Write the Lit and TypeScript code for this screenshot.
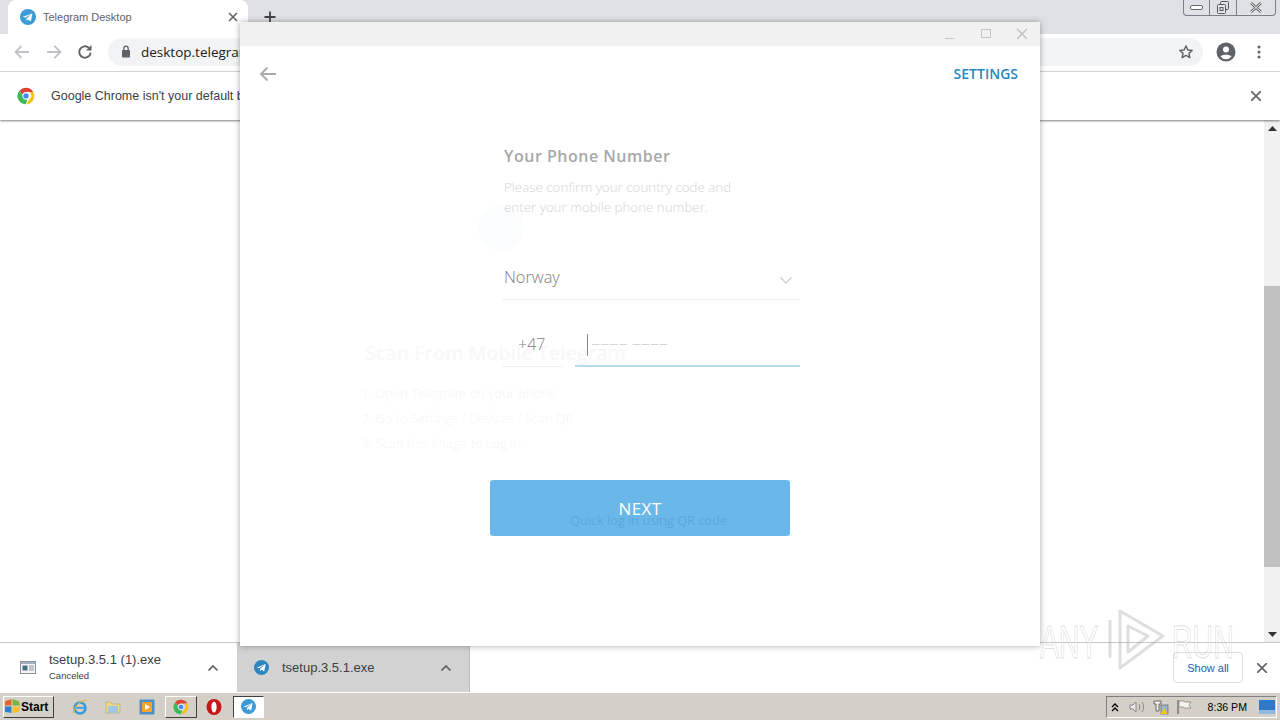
import { LitElement, html, css } from "lit";
import { customElement } from "lit/decorators.js";

const tgIcon = (s: number, c = "#3a9bd8") => html`<svg width=${s} height=${s} viewBox="0 0 24 24"><circle cx="12" cy="12" r="12" fill=${c}/><path d="M4.8 11.8 17.600 6.600c.6-.2 1.100.1.9.9l-2.100 10c-.2.7-.6.9-1.200.5l-3.300-2.400-1.600 1.500c-.2.2-.4.3-.7.3l.2-3.300 6-5.500c.3-.2-.1-.4-.4-.2l-7.500 4.700-3.200-1c-.7-.2-.7-.7.1-1z" fill="#fff"/></svg>`;

const chromeIcon = (s: number) => html`<svg width=${s} height=${s} viewBox="0 0 24 24"><path d="M12 1a11 11 0 0 1 9.600 5.600H12a5.400 5.400 0 0 0-5.100 3.600L3.500 4.600A11 11 0 0 1 12 1z" fill="#db4437"/><path d="M21.600 6.600A11 11 0 0 1 12.600 23l4.100-7a5.400 5.400 0 0 0-.6-9.400z" fill="#f4c20d"/><path d="M3.500 4.600l4.600 8A5.400 5.400 0 0 0 14 17.100L11.600 23A11 11 0 0 1 3.500 4.600z" fill="#3cba54"/><circle cx="12" cy="12" r="4.300" fill="#4a89f0" stroke="#fff" stroke-width="1.200"/></svg>`;

@customElement("tg-window")
class TgWindow extends LitElement {
  static styles = css`
    :host { position: absolute; left: 240px; top: 22px; width: 800px; height: 624px; z-index: 3; background: #fff; box-shadow: 0 0 6px rgba(0,0,0,.35); display: flex; flex-direction: column; font-family: "Open Sans", sans-serif; overflow: hidden; }
    .title { height: 24px; background: #f1f1f1; display: flex; justify-content: flex-end; flex: none; }
    .wb { width: 36px; height: 24px; display: flex; align-items: center; justify-content: center; }
    .body { position: relative; flex: 1; }
    .back { position: absolute; left: 19px; top: 20px; display: block; }
    .settings { position: absolute; right: 22px; top: 18px; font-size: 14px; font-weight: 600; color: #2a86bd; line-height: 20px; }
    .ghost { position: absolute; color: #f8f8f8; white-space: nowrap; }
    .g1 { left: 125px; top: 293px; font-size: 19.500px; font-weight: 600; }
    .g2 { left: 122px; top: 335px; font-size: 12.600px; line-height: 25px; white-space: pre; }
    .circle { position: absolute; left: 238px; top: 159px; width: 46px; height: 46px; border-radius: 50%; background: #fafdfe; }
    .form { position: absolute; left: 264px; top: 98px; width: 296px; }
    h1 { margin: 0; font-size: 16px; font-weight: 600; color: #a8a8a8; line-height: 24px; letter-spacing: .5px; }
    .desc { margin-top: 9px; font-size: 13.350px; font-weight: 300; line-height: 20px; color: #d4d4d4; }
    .country { margin: 40px 0 0 -2px; padding-left: 2px; height: 42px; border-bottom: 1px solid #f0f0f0; font-size: 16.400px; font-weight: 300; color: #808080; line-height: 40px; position: relative; }
    .chev { position: absolute; right: 7px; top: 19px; }
    .phone { margin: 23px 0 0 -2px; display: flex; gap: 12px; height: 44px; }
    .code { width: 61px; border-bottom: 1px solid #f0f0f0; box-sizing: border-box; padding-left: 16px; font-size: 16px; font-weight: 300; line-height: 43px; color: #808080; }
    .num { flex: 1; border-bottom: 2px solid #b8dbf0; position: relative; box-sizing: border-box; font-size: 16px; font-weight: 300; color: #c8c8c8; line-height: 43px; padding-left: 16px; }
    .caret { position: absolute; left: 12px; top: 11px; width: 1px; height: 22px; background: #8a8a8a; }
    .next { position: absolute; left: 250px; top: 434px; width: 300px; height: 56px; border-radius: 3px; background: #69b8e9; color: #fff; font-size: 17px; font-weight: 500; text-align: center; line-height: 58px; letter-spacing: .4px; }
    .qr { position: absolute; left: 80px; top: 28px; line-height: 24px; font-size: 12.700px; font-weight: 400; letter-spacing: 0; color: #5aa8da; white-space: nowrap; }
    .nx { position: relative; z-index: 1; }
  `;
  render() {
    return html`
      <div class="title">
        <div class="wb"><svg width="12" height="12"><path d="M1 10.500h9" stroke="#c4c4c4"/></svg></div>
        <div class="wb"><svg width="12" height="12"><rect x="1.500" y="1.500" width="9" height="8" fill="none" stroke="#c4c4c4"/></svg></div>
        <div class="wb"><svg width="12" height="12"><path d="M1 1l10 10M11 1L1 11" stroke="#bdbdbd" stroke-width="1.200"/></svg></div>
      </div>
      <div class="body">
        <svg class="back" width="18" height="16" viewBox="0 0 18 16"><path d="M17 8H2M8.500 1.500 2 8l6.500 6.500" fill="none" stroke="#a9a9a9" stroke-width="1.800"/></svg>
        <div class="settings">SETTINGS</div>
        <div class="circle"></div>
        <div class="ghost g1">Scan From Mobile Telegram</div>
        <div class="ghost g2">1. Open Telegram on your phone
2. Go to Settings / Devices / Scan QR
3. Scan this image to Log In</div>
        <div class="form">
          <h1>Your Phone Number</h1>
          <div class="desc">Please confirm your country code and<br>enter your mobile phone number.</div>
          <div class="country">Norway<svg class="chev" width="14" height="9" viewBox="0 0 14 9"><path d="M1.500 1.500 7 7l5.500-5.500" fill="none" stroke="#d0d0d0" stroke-width="1.500"/></svg></div>
          <div class="phone"><div class="code">+47</div><div class="num"><span class="caret"></span>−−−− −−−−</div></div>
        </div>
        <div class="next"><span class="nx">NEXT</span><span class="qr">Quick log in using QR code</span></div>
      </div>`;
  }
}

@customElement("app-root")
class AppRoot extends LitElement {
  static styles = css`
    :host { display: flex; flex-direction: column; position: relative; width: 1280px; height: 720px; overflow: hidden; font-family: "Liberation Sans", sans-serif; background: #fff; }
    .tabs { height: 34px; background: #dee1e6; display: flex; flex: none; position: relative; }
    .tab { margin-left: 8px; width: 240px; height: 34px; background: #fff; border-radius: 8px 8px 0 0; display: flex; align-items: center; box-sizing: border-box; padding: 0 10px 0 12px; font-size: 11px; color: #5f6368; gap: 7px; }
    .tab .t { flex: 1; }
    .plus { margin-left: 15px; width: 14px; height: 34px; display: flex; align-items: center; }
    .caption { position: absolute; right: 4px; top: 0; width: 93px; height: 16px; border: 1px solid #7b7f86; border-top: none; border-radius: 0 0 4px 4px; display: flex; box-sizing: border-box; }
    .cap { display: flex; align-items: center; justify-content: center; border-right: 1px solid #7b7f86; width: 25px; flex: none; }
    .cap.c2 { width: 26px; }
    .cap.c3 { flex: 1; border-right: none; }
    .toolbar { height: 38px; display: flex; align-items: center; flex: none; border-bottom: 1px solid #d9dbdf; box-sizing: border-box; padding-bottom: 2px; }
    .nav { display: flex; gap: 14px; margin-left: 13px; align-items: center; width: 95px; }
    .omni { width: 1095px; height: 28px; background: #f1f3f4; border-radius: 14px; display: flex; align-items: center; box-sizing: border-box; padding: 0 9px 0 13px; font-family: "Open Sans", sans-serif; font-size: 13.500px; color: #202124; gap: 10px; }
    .omni .u { flex: 1; }
    .tright { display: flex; align-items: center; margin-left: 13px; gap: 21px; }
    .infobar { height: 48px; display: flex; align-items: center; flex: none; box-shadow: 0 1px 2px rgba(0,0,0,.5); position: relative; z-index: 1; font-size: 12.500px; color: #3c4043; box-sizing: border-box; padding: 0 19px 0 17px; gap: 16px; }
    .infobar .m { flex: 1; }
    .page { flex: 1; display: flex; justify-content: flex-end; }
    .scroll { width: 16px; background: #f1f1f1; display: flex; flex-direction: column; align-items: center; }
    .sb { height: 16px; flex: none; display: flex; align-items: center; justify-content: center; }
    .track { flex: 1; width: 100%; padding-top: 150px; box-sizing: border-box; }
    .thumb { height: 281px; background: #c1c1c1; }
    .downloads { height: 50px; flex: none; border-top: 1px solid #c8c8c8; display: flex; box-sizing: border-box; align-items: center; position: relative; }
    .dl { width: 237px; height: 49px; display: flex; align-items: center; box-sizing: border-box; padding: 0 18px 0 20px; gap: 13px; font-size: 13px; color: #3c4043; }
    .dl.active { background: #d2d2d2; width: 233px; border-right: 1px solid #bcbcbc; padding: 0 17px; gap: 13px; }
    .dl .n { flex: 1; line-height: 16px; }
    .dl small { display: block; font-size: 9.500px; color: #3c4043; line-height: 16px; }
    .spacer { flex: 1; }
    .showall { width: 70px; height: 31px; border: 1px solid #dadce0; border-radius: 4px; box-sizing: border-box; font-size: 11px; color: #1a5fb4; display: flex; align-items: center; justify-content: center; margin-right: 14px; }
    .dlx { margin-right: 13px; display: block; }
    .taskbar { height: 28px; flex: none; background: #d4d0c8; border-top: 1px solid #fff; box-sizing: border-box; display: flex; align-items: center; }
    .start { margin-left: 3px; width: 51px; height: 22px; box-sizing: border-box; border: 1px solid; border-color: #fff #404040 #404040 #fff; font-weight: 700; font-size: 12px; display: flex; align-items: center; color: #000; }
    .quick { display: flex; align-items: center; margin-left: 9px; }
    .q { width: 33.500px; height: 24px; display: flex; align-items: center; justify-content: center; box-sizing: border-box; }
    .q.up { border: 1px solid; border-color: #fff #404040 #404040 #fff; width: 32px; margin-left: 1.500px; height: 22px; }
    .q.op { width: 34px; }
    .q.down { background: #fff; border: 1px solid; border-color: #404040 #fff #fff #404040; width: 31px; margin-left: 2px; height: 22px; }
    .tray { margin-left: auto; margin-right: 3px; width: 171px; height: 22px; box-sizing: border-box; border: 1px solid; border-color: #808080 #fff #fff #808080; display: flex; align-items: center; font-size: 10.600px; color: #000; }
    .clock { margin-left: auto; margin-right: 12px; }
    .tic { display: block; flex: none; }
    .watermark { position: absolute; left: 1036px; top: 608px; width: 200px; height: 62px; z-index: 5; pointer-events: none; }
    .wmt { position: absolute; top: 11px; font-size: 46px; line-height: 46px; color: rgba(255,255,255,.3); -webkit-text-stroke: 1px rgba(160,160,160,.35); transform: scaleX(.62); transform-origin: left; white-space: nowrap; }
    .wa { left: 4px; }
    .wr { left: 136px; }
    .wmi { position: absolute; left: 70px; top: 0; }
  `;
  render() {
    return html`
      <div class="tabs">
        <div class="tab">${tgIcon(16)}<span class="t">Telegram Desktop</span>
          <svg width="10" height="10"><path d="M1 1l8 8M9 1L1 9" stroke="#5f6368" stroke-width="1.600"/></svg></div>
        <div class="plus"><svg width="14" height="14"><path d="M7 1.500v11M1.500 7h11" stroke="#444" stroke-width="1.800"/></svg></div>
        <div class="caption">
          <div class="cap"><svg width="14" height="8"><rect x=".5" y="1.500" width="12" height="4" rx="1.500" fill="#fff" stroke="#666"/></svg></div>
          <div class="cap c2"><svg width="14" height="14"><rect x="4.500" y=".5" width="8" height="8" rx="1" fill="none" stroke="#555"/><rect x="1.500" y="3.500" width="8" height="9" rx="1" fill="#e4e6e9" stroke="#555"/><rect x="4" y="6.500" width="3" height="3" fill="none" stroke="#555"/></svg></div>
          <div class="cap c3"><svg width="14" height="12"><path d="M2 1l10 9M12 1L2 10" stroke="#666" stroke-width="2.600"/><path d="M2 1l10 9M12 1L2 10" stroke="#f0f0f0" stroke-width="1"/></svg></div>
        </div>
      </div>
      <div class="toolbar">
        <div class="nav">
          <svg width="18" height="16" viewBox="0 0 18 16"><path d="M16 8H3M8.500 2 2.500 8l6 6" fill="none" stroke="#c0c3c7" stroke-width="1.800"/></svg>
          <svg width="18" height="16" viewBox="0 0 18 16"><path d="M2 8h13M9.500 2l6 6-6 6" fill="none" stroke="#c0c3c7" stroke-width="1.800"/></svg>
          <svg width="16" height="16" viewBox="0 0 16 16"><path d="M13.600 8.600A5.700 5.700 0 1 1 12 4" fill="none" stroke="#5f6368" stroke-width="1.900"/><path d="M14.500 1v5.500H9z" fill="#5f6368"/></svg>
        </div>
        <div class="omni">
          <svg width="10" height="13" viewBox="0 0 10 13"><rect x="1" y="5" width="8" height="7.500" rx="1" fill="#5f6368"/><path d="M2.800 5V3.400a2.200 2.200 0 0 1 4.400 0V5" fill="none" stroke="#5f6368" stroke-width="1.300"/></svg>
          <span class="u">desktop.telegram.org</span>
          <svg width="16" height="16" viewBox="0 0 24 24"><path d="M12 3l2.800 6 6.500.7-4.900 4.400 1.400 6.400L12 17.200l-5.800 3.300 1.400-6.400L2.700 9.700 9.200 9z" fill="none" stroke="#5f6368" stroke-width="2.200" stroke-linejoin="round"/></svg>
        </div>
        <div class="tright">
          <svg width="20" height="20" viewBox="0 0 20 20"><circle cx="10" cy="10" r="9.500" fill="#5f6368"/><circle cx="10" cy="7.500" r="3" fill="#fff"/><path d="M4.500 14.500c1.500-2.400 9.500-2.400 11 0a7 7 0 0 1-11 0z" fill="#fff"/></svg>
          <svg width="4" height="14" viewBox="0 0 4 14"><circle cx="2" cy="2" r="1.500" fill="#5f6368"/><circle cx="2" cy="7" r="1.500" fill="#5f6368"/><circle cx="2" cy="12" r="1.500" fill="#5f6368"/></svg>
        </div>
      </div>
      <div class="infobar">
        ${chromeIcon(18)}
        <span class="m">Google Chrome isn't your default browser</span>
        <svg width="10" height="10"><path d="M0 0l10 10M10 0L0 10" stroke="#5f6368" stroke-width="1.700"/></svg>
      </div>
      <div class="page">
        <div class="scroll">
          <div class="sb"><svg width="9" height="5"><path d="M0 5 4.500 0 9 5z" fill="#333"/></svg></div>
          <div class="track"><div class="thumb"></div></div>
          <div class="sb"><svg width="9" height="5"><path d="M0 0h9L4.500 5z" fill="#333"/></svg></div>
        </div>
      </div>
      <div class="downloads">
        <div class="dl">
          <svg width="16" height="13" viewBox="0 0 16 13"><rect x=".5" y=".5" width="15" height="12" fill="#f4f6f8" stroke="#8b949b"/><rect x="1" y="1" width="14" height="2" fill="#9fb2c0"/><rect x="2.500" y="4.500" width="5" height="5" fill="#4c6d83"/><path d="M9 5h5M9 7h5M9 9h5" stroke="#8b949b"/></svg>
          <div class="n">tsetup.3.5.1 (1).exe<small>Canceled</small></div>
          <svg width="12" height="8" viewBox="0 0 12 8"><path d="M1.500 6.500 6 2l4.500 4.500" fill="none" stroke="#5f6368" stroke-width="1.700"/></svg>
        </div>
        <div class="dl active">
          ${tgIcon(15, "#2e86c1")}
          <div class="n">tsetup.3.5.1.exe</div>
          <svg width="12" height="8" viewBox="0 0 12 8"><path d="M1.500 6.500 6 2l4.500 4.500" fill="none" stroke="#5f6368" stroke-width="1.700"/></svg>
        </div>
        <div class="spacer"></div>
        <div class="showall">Show all</div>
        <svg class="dlx" width="10" height="10"><path d="M0 0l10 10M10 0L0 10" stroke="#5f6368" stroke-width="1.700"/></svg>
      </div>
      <div class="taskbar">
        <div class="start"><svg width="17" height="17" viewBox="0 0 16 16"><path d="M1 3l6-2v6H1z" fill="#e8632c"/><path d="M8 1l6 2 1 4H8z" fill="#7cb342"/><path d="M1 8h6v6l-6-1z" fill="#2a7fd4"/><path d="M8 8h7l-1 5-6 1z" fill="#f6c026"/></svg>Start</div>
        <div class="quick">
          <div class="q"><svg width="18" height="18" viewBox="0 0 18 18"><circle cx="9" cy="10" r="5.500" fill="none" stroke="#3a9bdc" stroke-width="2.600"/><path d="M4 9.800h10" stroke="#3a9bdc" stroke-width="1.800"/><path d="M2 15C5 7 10 2 16 2" fill="none" stroke="#e5b93c" stroke-width="1.200"/></svg></div>
          <div class="q"><svg width="16" height="15" viewBox="0 0 16 15"><path d="M1 3h5l1 2h8v9H1z" fill="#efd88c" stroke="#b8a25a" stroke-width=".6"/><rect x="3" y="7" width="10" height="7" fill="#9cc7de"/></svg></div>
          <div class="q"><svg width="16" height="16" viewBox="0 0 16 16"><rect x=".5" y=".5" width="15" height="15" rx="1" fill="#4d8fc7"/><rect x="3" y="3" width="10" height="10" rx="1" fill="#f7a22c"/><path d="M6 5v6l5-3z" fill="#fff"/></svg></div>
          <div class="q up">${chromeIcon(16)}</div>
          <div class="q op"><svg width="16" height="18" viewBox="0 0 16 18"><ellipse cx="8" cy="9" rx="7.500" ry="8" fill="#c8141a"/><ellipse cx="8" cy="9" rx="2.600" ry="5.600" fill="#fff"/></svg></div>
          <div class="q down">${tgIcon(15)}</div>
        </div>
        <div class="tray">
          <svg class="tic" style="margin-left:4px" width="8" height="10" viewBox="0 0 8 10"><path d="M1 5l3-3 3 3M1 9l3-3 3 3" fill="none" stroke="#000" stroke-width="1.400"/></svg>
          <svg class="tic" style="margin-left:9.500px" width="17" height="14" viewBox="0 0 17 14"><path d="M1 5h3l3-3v10L4 9H1z" fill="#e8e8e8" stroke="#888"/><path d="M10 4c1 2 1 4 0 6M13 2c2 3 2 7 0 10" fill="none" stroke="#888"/></svg>
          <svg class="tic" style="margin-left:7.500px" width="16" height="16" viewBox="0 0 16 16"><path d="M1 2h7v3H6v7H3V5H1z" fill="#eee" stroke="#666"/><rect x="8" y="6" width="7" height="9" fill="#9fb6c6" stroke="#555" stroke-width=".6"/><path d="M11 9l3.500 6h-7z" fill="#f5c518"/></svg>
          <svg class="tic" style="margin-left:7px" width="16" height="16" viewBox="0 0 16 16"><path d="M2 1v14" stroke="#777" stroke-width="1.500"/><path d="M3 2h5l1 1 6 0-2 3 2 3H8L7 8H3z" fill="#f2f2f2" stroke="#888" stroke-width=".8"/></svg>
          <span class="clock">8:36 PM</span>
          <svg style="margin-right:1px" width="16" height="14" viewBox="0 0 16 14"><rect width="16" height="14" fill="#2f78c8"/><rect y="10" width="16" height="4" fill="#8fb9e0"/></svg>
        </div>
      </div>
      <tg-window></tg-window>
      <div class="watermark">
        <span class="wmt wa">ANY</span>
        <svg class="wmi" width="62" height="62" viewBox="0 0 62 62"><path d="M14 3 57 28 14 60zM22 18 42 28 22 44zM4 12v38" fill="none" stroke="rgba(160,160,160,.35)" stroke-width="3" stroke-linejoin="round"/></svg>
        <span class="wmt wr">RUN</span>
      </div>
    `;
  }
}
